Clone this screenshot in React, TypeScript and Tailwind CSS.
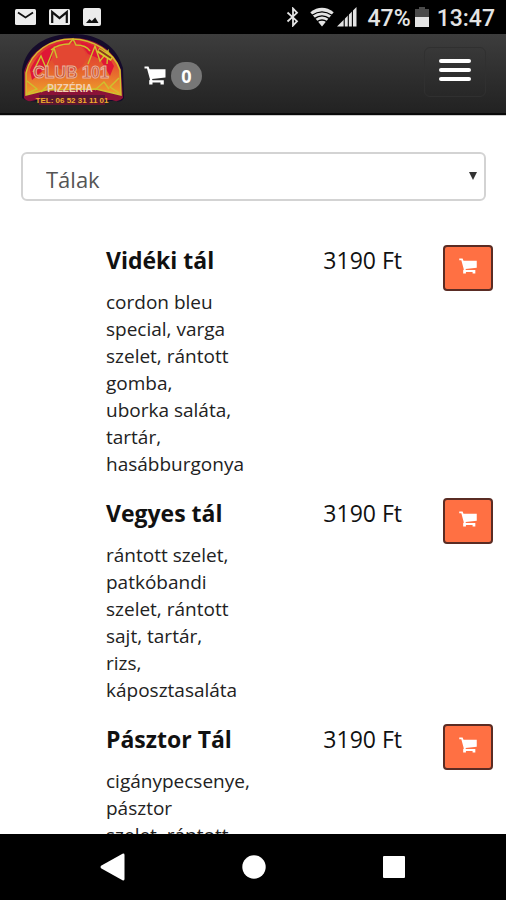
const dishes = [
  {
    name: 'Vidéki tál',
    price: '3190 Ft',
    description: 'cordon bleu\nspecial, varga\nszelet, rántott\ngomba,\nuborka saláta,\ntartár,\nhasábburgonya',
  },
  {
    name: 'Vegyes tál',
    price: '3190 Ft',
    description: 'rántott szelet,\npatkóbandi\nszelet, rántott\nsajt, tartár,\nrizs,\nkáposztasaláta',
  },
  {
    name: 'Pásztor Tál',
    price: '3190 Ft',
    description: 'cigánypecsenye,\npásztor\nszelet, rántott',
  },
];

function CartIcon({ className }: { className: string }) {
  return (
    <svg viewBox="0 0 24 20" className={className} fill="currentColor" aria-hidden="true">
      <path d="M1.500 0.500H5.500L6.600 3.200H22.500V11.500L9 13L9.500 14.300H20.800V18.500H17.500V16.500H9.500V18.500H6.200V14.500L7 13.500L4 2.500H1.500z" />
    </svg>
  );
}

function MailIcon() {
  return (
    <svg viewBox="0 0 21 18" className="h-[18px] w-[21px]" aria-hidden="true">
      <rect x="0" y="1" width="21" height="16" rx="1.5" fill="#ececec" />
      <path d="M3 4.5l7.5 5 7.5-5" fill="none" stroke="#111" strokeWidth="1.8" />
    </svg>
  );
}

function GmailIcon() {
  return (
    <svg viewBox="0 0 21 18" className="h-[18px] w-[21px]" aria-hidden="true">
      <rect x="0" y="1" width="21" height="16" rx="1.5" fill="#ececec" />
      <path d="M3.2 15V4.2l7.3 6 7.3-6V15" fill="none" stroke="#111" strokeWidth="2.2" />
    </svg>
  );
}

function PictureIcon() {
  return (
    <svg viewBox="0 0 18 18" className="h-[18px] w-[18px]" aria-hidden="true">
      <rect width="18" height="18" rx="2" fill="#ececec" />
      <path d="M3 15l3.500-4 2.300 2 3.400-3.600L15.500 15z" fill="#111" />
    </svg>
  );
}

function StatusBar() {
  return (
    <div className="flex h-[34px] shrink-0 items-center bg-black pr-[11px] pl-[15px] text-[#e4e4e4]">
      <div className="flex flex-1 items-center gap-[13px]">
        <MailIcon />
        <GmailIcon />
        <PictureIcon />
      </div>
      <svg viewBox="0 0 14 20" className="mr-[10px] h-5 w-[14px]" fill="none" stroke="currentColor" strokeWidth="1.8" aria-hidden="true">
        <path d="M1.500 5.500l9.500 8.700L7 18.500v-17l4 4.300L1.500 14.500" />
      </svg>
      <svg viewBox="0 0 24 20" className="mr-[3px] h-5 w-6" aria-hidden="true">
        <path d="M0.300 5.200Q12-3.600 23.700 5.200L12 19.500z" fill="currentColor" />
        <path d="M2 8.300q10-7 20 0M4.400 11.600q7.600-5.400 15.200 0M7.200 14.600q4.800-3.200 9.600 0" fill="none" stroke="#000" strokeWidth="1.300" />
      </svg>
      <svg viewBox="0 0 20 20" className="mr-[11px] h-5 w-5" aria-hidden="true">
        <path d="M0 19.500L19.500 0v19.500z" fill="currentColor" />
        <path d="M7.200 8v12M11.300 4v16M15.400 0v20" stroke="#000" strokeWidth="1.100" />
      </svg>
      <span className="pt-[3px] font-['Roboto',sans-serif] text-[23px] leading-[34px] font-medium">47%</span>
      <svg viewBox="0 0 14 20" className="mr-2 ml-1 h-5 w-[14px]" aria-hidden="true">
        <path d="M4 0h6v2h4v8H0V2h4z" fill="#4a4a4a" />
        <path d="M0 10h14v10H0z" fill="currentColor" />
      </svg>
      <span className="pt-[3px] font-['Roboto',sans-serif] text-[23px] leading-[34px] font-medium">13:47</span>
    </div>
  );
}

function Logo() {
  return (
    <svg viewBox="0 0 104 72" className="h-[72px] w-[104px]" role="img" aria-label="Club 101 Pizzéria">
      <defs>
        <linearGradient id="glow" x1="0" y1="0" x2="0" y2="1">
          <stop offset="0" stopColor="#dc2536" />
          <stop offset="0.5" stopColor="#e55a2e" />
          <stop offset="1" stopColor="#efa32b" />
        </linearGradient>
      </defs>
      <path d="M1 64V36C5 12 25 0 52 0s44 13 50 34l1 30q-3 5-8 3H20Q8 69 1 64z" fill="#150b2b" />
      <path d="M3 64V38C9 17 29 4 52 4s42 13 48 32l2 28q-5 5-11 2H15Q6 69 3 64z" fill="#8b1238" />
      <path d="M5 61V39C10 17 30 5 51 5s42 13 48 31l1 25-25-6-50 1z" fill="url(#glow)" stroke="#d1c02e" strokeWidth="1.500" />
      <path d="M9 36C17 17 32 9 46 8l-12 10-8 15-15 13zM59 8q24 4 34 24l-4 10-10-17-12-5z" fill="#df1736" />
      <ellipse cx="48" cy="23" rx="17" ry="14" fill="#e34732" />
      <path d="M12 38l8-16 5 12 8-20 3 10M67 30l7-18 5 15 8-10-1 13M6 47l10 8-9 4M98 44l-9 9 9 6M30 16q7-6 18-6l4-5 3 6q10 0 14 6M20 58l8-8 7 7M74 56l9-8 5 7" fill="none" stroke="#cfc02d" strokeWidth="1.400" />
      <path d="M77 16l14 9" stroke="#d9c92e" strokeWidth="5" />
      <path d="M78 16l12 8" stroke="#8b3a1a" strokeWidth="2" />
      <text x="50" y="44" textAnchor="middle" fontFamily="Liberation Sans, sans-serif" fontWeight="700" fontSize="16" fill="#b94b36" stroke="#edb29b" strokeWidth="1">CLUB 101</text>
      <text x="49" y="58" textAnchor="middle" fontFamily="Liberation Sans, sans-serif" fontWeight="700" fontSize="10" fill="#f3d0b4">PIZZÉRIA</text>
      <path d="M18 61h66v10H18z" fill="#5a1730" />
      <text x="51" y="69" textAnchor="middle" fontFamily="Liberation Sans, sans-serif" fontWeight="700" fontSize="8" fill="#f0ad2c">TEL: 06 52 31 11 01</text>
    </svg>
  );
}

function Header() {
  return (
    <header className="flex h-[81px] shrink-0 items-center border-b-2 border-[#090909] bg-linear-to-b from-[#3d3d3d] to-[#222] pr-5 pl-[21px]">
      <a href="#home" className="mb-2"><Logo /></a>
      <a href="#cart" aria-label="Kosár, 0" className="ml-[18px] flex items-center gap-1 pt-1 text-white">
        <CartIcon className="h-5 w-6" />
        <span className="flex h-7 w-[31px] items-center justify-center rounded-full bg-[#777] text-lg font-bold">0</span>
      </a>
      <button type="button" aria-label="Menü" className="mb-1 ml-auto flex h-[50px] w-[62px] flex-col items-center justify-center gap-[5px] rounded-md border border-[#303030] pb-1">
        <span className="h-1 w-8 rounded-xs bg-white" />
        <span className="h-1 w-8 rounded-xs bg-white" />
        <span className="h-1 w-8 rounded-xs bg-white" />
      </button>
    </header>
  );
}

export default function App() {
  return (
    <div className="flex h-screen flex-col bg-white font-['Open_Sans',sans-serif] text-[#111]">
      <StatusBar />
      <Header />
      <main className="min-h-0 flex-1 overflow-hidden border-t border-[#ccc] pt-9">
        <div className="relative mr-5 ml-[21px]">
          <select aria-label="Kategória" defaultValue="talak" className="h-[49px] w-full appearance-none rounded-md border-2 border-[#d3d3d3] bg-white pt-[6px] pl-[23px] text-[22px] text-[#555]">
            <option value="talak">Tálak</option>
          </select>
          <svg viewBox="0 0 8 8" className="pointer-events-none absolute top-5 right-[9px] h-2 w-2" fill="#333" aria-hidden="true">
            <path d="M0 0h8L4 8z" />
          </svg>
        </div>
        <ul className="mt-11 pr-[13px] pl-[106px]">
          {dishes.map((dish) => (
            <li key={dish.name} className="flex items-start pb-5">
              <div className="flex-1">
                <h2 className="text-[23px] leading-[30px] font-bold">{dish.name}</h2>
                <p className="mt-[14px] text-[19px] leading-[27px] whitespace-pre-line text-[#222]">{dish.description}</p>
              </div>
              <span className="mr-[41px] text-[23px] leading-[30px]">{dish.price}</span>
              <button type="button" aria-label={`Kosárba: ${dish.name}`} className="flex h-[46px] w-[50px] items-center justify-center rounded-sm border-2 border-[#5a2c24] bg-[#ff7043] pb-1 text-white">
                <CartIcon className="h-[17px] w-5" />
              </button>
            </li>
          ))}
        </ul>
      </main>
      <nav aria-label="Rendszer" className="flex h-[66px] shrink-0 items-center justify-center gap-[116px] bg-black text-white">
        <button type="button" aria-label="Vissza">
          <svg viewBox="0 0 26 28" className="h-7 w-[26px]" fill="currentColor"><path d="M1 12.800L22.500.700Q24.500 0 24.500 2v24q0 2-2 1.200L1 15.200Q0 14 1 12.800z" /></svg>
        </button>
        <button type="button" aria-label="Kezdőlap">
          <svg viewBox="0 0 24 24" className="h-6 w-6" fill="currentColor"><circle cx="12" cy="12" r="11.700" /></svg>
        </button>
        <button type="button" aria-label="Áttekintés">
          <svg viewBox="0 0 24 24" className="h-6 w-6" fill="currentColor"><rect x="1" y="1" width="22" height="22" rx="1" /></svg>
        </button>
      </nav>
    </div>
  );
}
